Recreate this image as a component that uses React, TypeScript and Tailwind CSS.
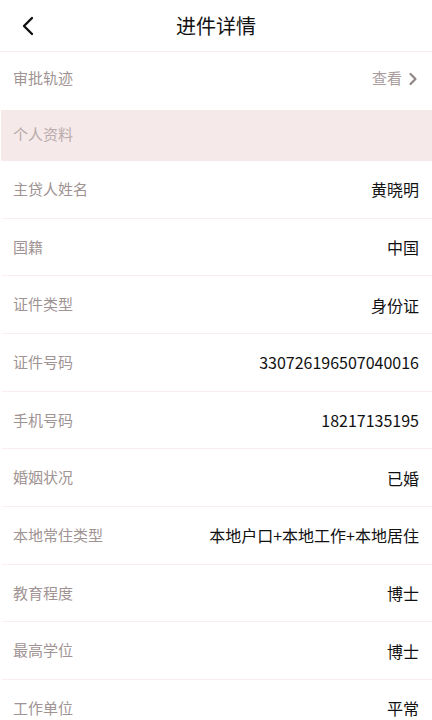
import { ChevronRight } from 'lucide-react';

interface InfoRow {
  label: string;
  value: string;
}

const rows: InfoRow[] = [
  { label: '主贷人姓名', value: '黄晓明' },
  { label: '国籍', value: '中国' },
  { label: '证件类型', value: '身份证' },
  { label: '证件号码', value: '330726196507040016' },
  { label: '手机号码', value: '18217135195' },
  { label: '婚姻状况', value: '已婚' },
  { label: '本地常住类型', value: '本地户口+本地工作+本地居住' },
  { label: '教育程度', value: '博士' },
  { label: '最高学位', value: '博士' },
  { label: '工作单位', value: '平常' },
];

export default function App() {
  return (
    <div
      className="h-[720px] w-[432px] overflow-hidden bg-white"
      style={{ fontFamily: '"Noto Sans CJK SC", "Noto Sans", sans-serif' }}
    >
      <header className="relative flex h-[52px] items-center justify-center border-b border-[#fbeeee]">
        <button className="absolute left-[18px] top-[14px] flex h-[24px] w-[20px] items-center justify-center">
          <svg width="14" height="20" viewBox="0 0 14 20" fill="none">
            <path d="M11 2 L3 10 L11 18" stroke="#111" strokeWidth="2.4" strokeLinecap="round" strokeLinejoin="round" />
          </svg>
        </button>
        <h1 className="text-[20px] leading-none text-[#111]">进件详情</h1>
      </header>

      <div className="flex h-[58px] items-center justify-between px-[13px] pb-[5px]">
        <span className="text-[15px] text-[#a09393]">审批轨迹</span>
        <span className="flex items-center gap-[1px] text-[15px] text-[#a89c9c]">
          查看
          <ChevronRight className="-mr-[4px] h-[20px] w-[20px] text-[#8f8585]" strokeWidth={2.6} />
        </span>
      </div>

      <div className="ml-[1px] flex h-[51px] items-center bg-[#f5e9e9] px-[12px] pb-[3px]">
        <span className="text-[15px] text-[#b9abab]">个人资料</span>
      </div>

      {rows.map(row => (
        <div
          key={row.label}
          className="ml-[2px] flex h-[57.67px] items-center justify-between border-b border-[#fbeeee] pl-[11px] pr-[13px]"
        >
          <span className="text-[15px] text-[#a09393]">{row.label}</span>
          <span className="text-[16px] text-[#111]">{row.value}</span>
        </div>
      ))}
    </div>
  );
}
